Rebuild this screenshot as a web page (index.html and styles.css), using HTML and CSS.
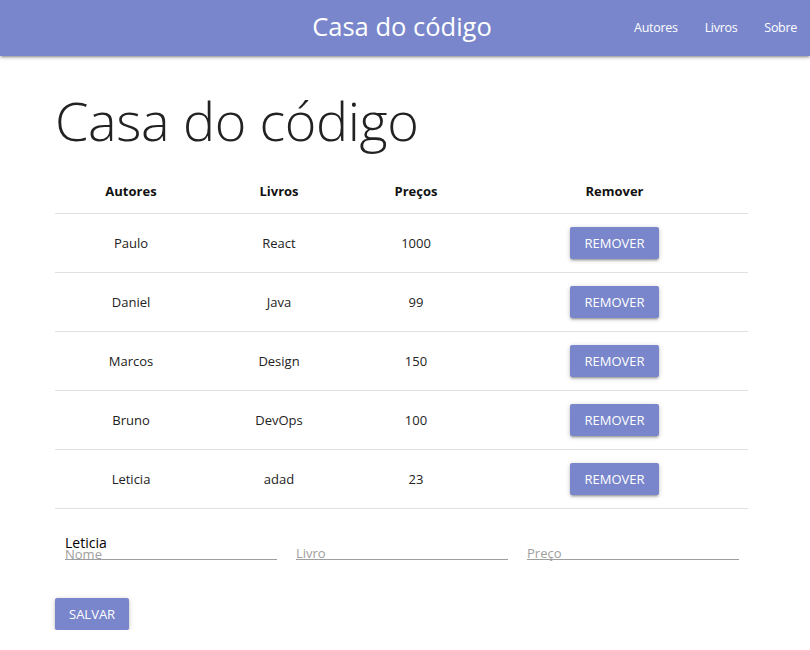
FILE: index.html
```html
<!DOCTYPE html>
<html lang="pt">
<head>
<meta charset="utf-8">
<title>Casa do código</title>
<link rel="stylesheet" href="styles.css">
</head>
<body>
<header class="nav">
  <a class="brand" href="#">Casa do código</a>
  <ul class="nav-links">
    <li><a href="#">Autores</a></li>
    <li><a href="#">Livros</a></li>
    <li><a href="#">Sobre</a></li>
  </ul>
</header>
<main class="container">
  <h1 class="title">Casa do código</h1>
  <table class="books">
    <thead>
      <tr><th class="c1">Autores</th><th class="c2">Livros</th><th class="c3">Preços</th><th class="c4">Remover</th></tr>
    </thead>
    <tbody>
      <tr><td>Paulo</td><td>React</td><td>1000</td><td><button class="btn">REMOVER</button></td></tr>
      <tr><td>Daniel</td><td>Java</td><td>99</td><td><button class="btn">REMOVER</button></td></tr>
      <tr><td>Marcos</td><td>Design</td><td>150</td><td><button class="btn">REMOVER</button></td></tr>
      <tr><td>Bruno</td><td>DevOps</td><td>100</td><td><button class="btn">REMOVER</button></td></tr>
      <tr><td>Leticia</td><td>adad</td><td>23</td><td><button class="btn">REMOVER</button></td></tr>
    </tbody>
  </table>
  <form class="form">
    <div class="fields">
      <div class="field"><span class="value">Leticia</span><span class="label">Nome</span></div>
      <div class="field"><span class="value"></span><span class="label">Livro</span></div>
      <div class="field"><span class="value"></span><span class="label">Preço</span></div>
    </div>
    <button type="button" class="btn save">SALVAR</button>
  </form>
</main>
</body>
</html>
```
FILE: styles.css
```css
* { box-sizing: border-box; }
html, body { margin: 0; padding: 0; }
body {
  font-family: "Open Sans", "Noto Sans", sans-serif;
  color: rgba(0,0,0,0.87);
  background: #fff;
}
.nav {
  position: relative;
  height: 56px;
  background: #7986cb;
  box-shadow: 0 2px 2px 0 rgba(0,0,0,0.14), 0 3px 1px -2px rgba(0,0,0,0.12), 0 1px 5px 0 rgba(0,0,0,0.2);
  display: flex;
  justify-content: flex-end;
  align-items: center;
}
.brand {
  position: absolute;
  left: 50%;
  top: 0;
  transform: translateX(-50%);
  line-height: 53px;
  font-size: 25.5px;
  color: #fff;
  text-decoration: none;
  margin-left: -3px;
}
.nav-links {
  list-style: none;
  margin: 0;
  padding: 0;
  display: flex;
}
.nav-links a {
  display: block;
  padding: 0 13px 0 14px;
  line-height: 52px;
  color: #fff;
  font-size: 12.5px;
  letter-spacing: -0.3px;
  text-decoration: none;
}
.container {
  padding: 0 62px 0 55px;
}
.title {
  margin: 0;
  padding-top: 37px;
  font-size: 54px;
  font-weight: 300;
  line-height: 1;
  color: #222;
  letter-spacing: -0.4px;
}
.books {
  margin-top: 22px;
  width: 100%;
  border-collapse: collapse;
  font-size: 13px;
}
.books th {
  font-weight: 700;
  height: 44px;
  padding: 0;
  text-align: center;
  vertical-align: middle;
  color: #111;
}
.c1 { width: 152px; }
.c2 { width: 144px; }
.c3 { width: 130px; }
.books tr { border-bottom: 1px solid #e0e0e0; }
.books td {
  height: 59px;
  padding: 0;
  text-align: center;
  vertical-align: middle;
  color: #222;
}
.btn {
  font-family: inherit;
  border: none;
  border-radius: 2px;
  background: #7986cb;
  color: #fff;
  font-size: 13px;
  height: 32px;
  padding: 0 14px;
  box-shadow: 0 2px 2px 0 rgba(0,0,0,0.14), 0 3px 1px -2px rgba(0,0,0,0.12), 0 1px 5px 0 rgba(0,0,0,0.2);
  cursor: pointer;
}
.fields {
  display: grid;
  grid-template-columns: repeat(3, 1fr);
  column-gap: 19px;
  padding: 27px 9px 0 10px;
}
.field {
  display: flex;
  flex-direction: column;
  border-bottom: 1px solid #9e9e9e;
  height: 24px;
}
.value {
  font-size: 14px;
  line-height: 14px;
  height: 12px;
  color: #000;
}
.label {
  font-size: 13px;
  line-height: 12px;
  color: #9e9e9e;
}
.save {
  margin-top: 38px;
}
```
